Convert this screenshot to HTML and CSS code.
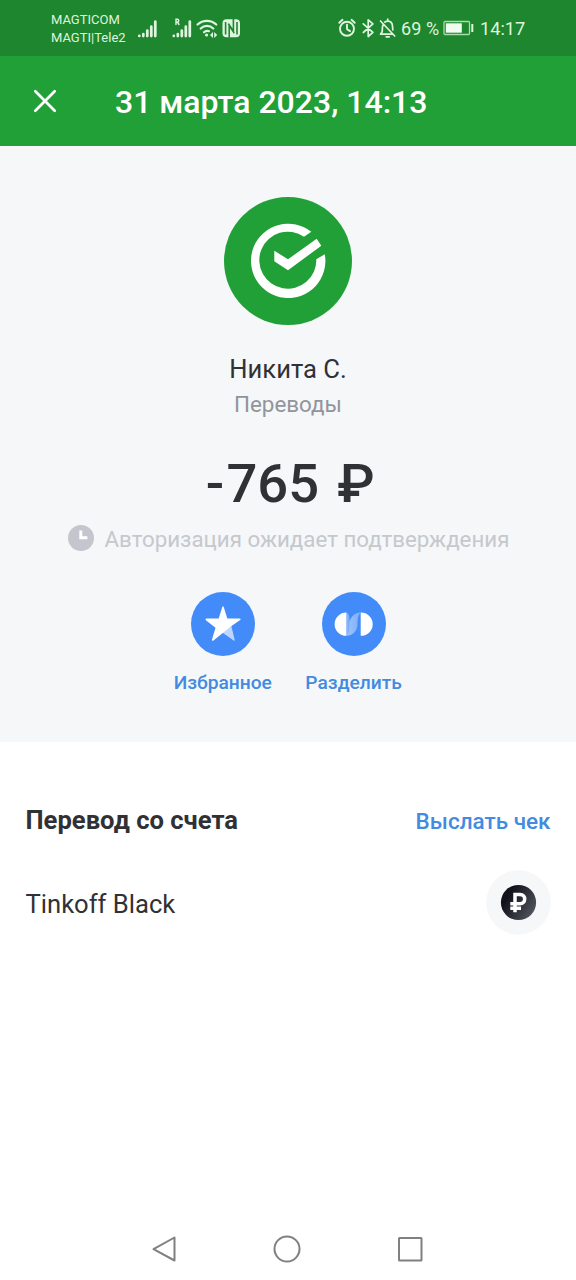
FILE: index.html
```html
<!DOCTYPE html>
<html lang="ru">
<head>
<meta charset="utf-8">
<title>Операция</title>
<link rel="stylesheet" href="styles.css">
</head>
<body>
<div class="screen">
  <div class="status">
    <div class="carriers"><span class="c1">MAGTICOM</span><span class="c2">MAGTI|Tele2</span></div>
    <svg class="signals" width="110" height="24" viewBox="0 0 110 24" fill="none" stroke="#dff5df" stroke-linecap="round">
      <path stroke-width="2.7" d="M5.300 19.800v.2M9.300 18.100v2M13.300 14.500v5.600M17.300 10.500v9.600M21.300 5.500v14.600M39.800 19.800v.2M43.800 18.100v2M47.800 14.500v5.600M51.800 10.500v9.600M55.800 5.500v14.600"/>
      <path stroke-width="1.4" d="M42 8.500V3.300h1.400a1.300 1.300 0 0 1 0 2.700H42M43.400 6l1.600 2.500"/>
      <path stroke-width="2.200" d="M63.500 8.500a14 14 0 0 1 18.800 0M66.700 12.500a9 9 0 0 1 12.600 0M70 16.300a4.500 4.500 0 0 1 5 -1.100"/>
      <circle cx="72.600" cy="19" r="1.600" fill="#dff5df" stroke="none"/>
      <path stroke="none" fill="#dff5df" d="M79 16v6l-3-3zM80.200 16v6l3-3z"/>
      <rect x="88.500" y="3.300" width="17.500" height="18" rx="4" fill="#dff5df" stroke="none"/>
      <path stroke="#1e862e" stroke-width="1.600" stroke-linecap="butt" d="M91.600 6v12.500M95.200 21.500V9.500l5 7.500M99.400 3v12.300l-5-7.600M103 6v12.500"/>
    </svg>
    <svg class="alerts" width="62" height="24" viewBox="0 0 62 24" fill="none" stroke="#dff5df" stroke-width="1.9" stroke-linecap="round" stroke-linejoin="round">
      <circle cx="10" cy="12.8" r="7"/><path d="M10 8.8v4.3l3 2M2.3 6.8l3.2-3M17.7 6.8l-3.2-3"/>
      <path stroke-width="1.7" d="M26.3 7.8l9.6 8.6-4.7 4.1V3.8l4.7 4.1-9.6 8.6"/>
      <path stroke-width="1.7" d="M43.500 5l14.200 15M46 8.700c-.8 2-.6 4.700-.8 7l-1.700 2.500h11.600M47.800 6.200c2.200-2 6-1.200 7.200 1.400.7 1.800.5 4 .8 6.300M50.700 3.800v-.6M49.200 20.800h3"/>
    </svg>
    <span class="percent">69 %</span>
    <svg class="battery" width="32" height="16" viewBox="0 0 32 16"><rect x="1" y="1.5" width="25.5" height="13" rx="1" fill="none" stroke="#a9dca9" stroke-width="1.3"/><path fill="#effcef" d="M2.8 3.300h16v9.400h-16z"/><path fill="#dff5df" d="M28.300 4h2v8h-2z"/></svg>
    <span class="time">14:17</span>
  </div>

  <header class="header">
    <svg width="24" height="24" viewBox="0 0 24 24"><path d="M2.3 2.3l19.4 19.4M21.7 2.3L2.3 21.7" stroke="#fff" stroke-width="2.7" stroke-linecap="round"/></svg>
    <h1 class="title"><span>31 марта 2023, 14:13</span></h1>
  </header>

  <section class="hero">
    <svg class="logo" width="128" height="128" viewBox="0 0 128 128"><circle cx="64" cy="64" r="64" fill="#21a038"/><path fill="#fff" d="M87.300 34.700A37.200 37.200 0 1 0 100.800 57.200L92.300 62.300A28.500 28.500 0 1 1 80 39.700ZM50.300 53.700L64 62.300 92.700 41.700 97.300 48.700 64 73.300 50.300 64.300Z"/></svg>
    <div class="name"><span>Никита С.</span></div>
    <div class="category"><span>Переводы</span></div>
    <div class="amount"><span class="minus">-</span><span class="sum">765</span><span class="currency">₽</span></div>
    <div class="pending">
      <svg width="26" height="26" viewBox="0 0 26 26"><circle cx="13" cy="13" r="13" fill="#c3c7cd"/><path d="M12.8 5.5v7.3h6.6" fill="none" stroke="#fff" stroke-width="3"/></svg>
      <span>Авторизация ожидает подтверждения</span>
    </div>
    <div class="actions">
      <div class="action">
        <svg width="64" height="64" viewBox="0 0 64 64"><circle cx="32" cy="32" r="32" fill="#428bf9"/><path fill="#fff" fill-opacity=".65" stroke="none" d="M28 40L40 32.500L43.700 48Q43.800 49.200 42.700 48.500L32 41Z"/><path fill="#fff" d="M32 14.300Q32.500 14.300 32.900 15.500L36.300 26.400H48.300Q50.700 26.600 48.800 28.300L39.800 34.500 22.500 48.400Q20.600 49.500 21 47.500L24.500 35.700 15.200 28.500Q13.500 26.700 15.700 26.400H27.700L31.100 15.500Q31.500 14.300 32 14.300Z"/></svg>
        <span class="label fav">Избранное</span>
      </div>
      <div class="action">
        <svg width="64" height="64" viewBox="0 0 64 64">
          <defs><linearGradient id="fadeL"><stop stop-color="#fff" stop-opacity=".45"/><stop offset="1" stop-color="#fff" stop-opacity=".2"/></linearGradient><linearGradient id="fadeR"><stop stop-color="#fff" stop-opacity=".5"/><stop offset="1" stop-color="#fff" stop-opacity=".3"/></linearGradient></defs>
          <circle cx="32" cy="32" r="32" fill="#428bf9"/><path fill="#fff" d="M24.300 20.600V43.800A11.700 11.600 0 0 1 24.300 20.600ZM38.700 20.600V43.800H39A11.700 11.600 0 0 0 39 20.600Z"/><path fill="url(#fadeL)" d="M24.300 20.600C27 21.500 28 25 28 32.200S27 42 24.300 43.800Z"/><path fill="url(#fadeR)" d="M24.300 43.800C31 43.800 35.500 38.500 35.500 32.200S36.500 23 38.700 20.600C32 20.600 27.500 26 27.500 32.200S27 42 24.300 43.800Z"/></svg>
        <span class="label split">Разделить</span>
      </div>
    </div>
  </section>

  <section class="account">
    <div class="row heading"><h2 class="from">Перевод со счета</h2><a class="receipt">Выслать чек</a></div>
    <div class="row source"><span class="card">Tinkoff Black</span>
      <svg width="65" height="65" viewBox="0 0 65 65"><defs><linearGradient id="coin" x1="0" y1=".2" x2="1" y2=".8"><stop offset=".2" stop-color="#10131b"/><stop offset="1" stop-color="#555861"/></linearGradient></defs><circle cx="32.500" cy="32.500" r="32.300" fill="#f5f7f9"/><circle cx="32.500" cy="32.500" r="17.600" fill="url(#coin)"/><path fill="none" stroke="#fff" stroke-width="3.500" d="M29 42.300V24.500H34C40.500 24.500 40 33.800 34 33.800H24.300M24.300 38.300H35"/></svg>
    </div>
  </section>

  <nav class="nav">
    <svg width="24" height="28" viewBox="0 0 24 28"><path d="M22.500 2.500V25.500L1.500 14.200Z"/></svg>
    <svg width="28" height="28" viewBox="0 0 28 28"><circle cx="14" cy="14" r="12.500"/></svg>
    <svg width="26" height="26" viewBox="0 0 26 26"><rect x="2" y="2" width="22.500" height="22.500" rx=".5"/></svg>
  </nav>
</div>
</body>
</html>
```
FILE: styles.css
```css
* { box-sizing: border-box; }
body { margin: 0; background: #fff; color: #303135; font-family: Roboto, "Noto Sans", sans-serif; }
h1, h2 { margin: 0; }
svg { display: block; flex: none; }
.screen { width: 576px; height: 1280px; display: flex; flex-direction: column; overflow: hidden; white-space: nowrap; }
.status { height: 56px; flex: none; background: #1e862e; color: #dff5df; display: flex; align-items: center; padding-left: 51px; }
.carriers { width: 83px; flex: none; display: flex; flex-direction: column; font-size: 13px; line-height: 18px; padding-top: 1px; }
.signals { margin-right: 93px; }
.percent { font-size: 18px; margin-left: 2px; width: 42px; letter-spacing: .1px; }
.time { font-size: 18.2px; margin-left: 5px; }
.header { height: 90px; flex: none; background: #22a038; color: #fff; display: flex; align-items: center; padding-left: 33px; gap: 58px; }
.title { font-size: 32px; font-weight: 500; line-height: 40px; padding-top: 1px; }
.hero { height: 596px; flex: none; background: #f5f7f9; display: flex; flex-direction: column; align-items: center; padding-top: 51px; }
.name { margin-top: 28px; font-size: 25.6px; line-height: 32px; }
.category { margin-top: 5px; font-size: 22.4px; line-height: 28px; color: #91959b; }
.amount { margin-top: 31px; margin-left: 2px; display: flex; font-size: 54.4px; font-weight: 500; line-height: 70px; }
.minus { width: 23px; display: flex; justify-content: center; }
.currency { margin-left: 18px; }
.pending { margin-top: 5px; margin-left: 1px; height: 30px; display: flex; align-items: center; gap: 11px; font-size: 22.3px; color: #c5c8cc; }
.pending svg { margin-bottom: 2px; }
.actions { margin-top: 37.500px; margin-right: .5px; display: flex; gap: 33.500px; }
.action { display: flex; flex-direction: column; align-items: center; }
.label { margin-top: 14px; font-size: 19.2px; line-height: 26px; font-weight: 500; color: #428be0; }
.account { flex: 1; padding: 60px 25.500px 0; }
.row { display: flex; align-items: center; justify-content: space-between; }
.heading { height: 36px; }
.from { font-size: 25.6px; font-weight: 700; }
.receipt { font-size: 22.5px; font-weight: 500; color: #428be0; padding-top: 2px; }
.source { margin-top: 32px; height: 65px; }
.card { font-size: 25.6px; padding-top: 2px; }
.nav { height: 62px; flex: none; display: flex; justify-content: space-between; align-items: center; padding: 0 153px 0 152px; fill: none; stroke: #808080; stroke-width: 2; stroke-linejoin: round; }
```
